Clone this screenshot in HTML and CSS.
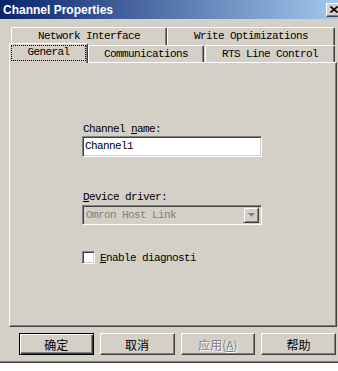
FILE: index.html
```html
<!DOCTYPE html>
<html lang="en">
<head>
  <meta charset="UTF-8">
  <title>Channel Properties</title>
  <link rel="stylesheet" href="styles.css">
</head>
<body>

  <div class="dialog">
    <!-- title bar -->
    <div class="titlebar">
      <span class="title">Channel Properties</span>
      <span class="close">
        <svg width="8" height="7" viewBox="0 0 8 7"><path d="M0.5 0.5 L7.5 6.5 M7.5 0.5 L0.5 6.5" stroke="#000" stroke-width="1.6" fill="none"/></svg>
      </span>
    </div>

    <div class="dialog-body">
      <!-- tabs -->
      <div class="tabs">
        <div class="tab-row tab-row-back">
          <div class="tab tab-net">Network Interface</div>
          <div class="tab tab-write">Write Optimizations</div>
        </div>
        <div class="tab-row tab-row-front">
          <div class="tab tab-general tab-active"><span class="focus">General</span></div>
          <div class="tab tab-comm">Communications</div>
          <div class="tab tab-rts">RTS Line Control</div>
        </div>
      </div>

      <!-- General page -->
      <div class="panel">
        <label class="field-label">Channel <u>n</u>ame:</label>
        <div class="textbox">Channel1</div>

        <label class="field-label field-label-gap"><u>D</u>evice driver:</label>
        <div class="combo">
          <span class="combo-text">Omron Host Link</span>
          <span class="combo-btn">
            <svg width="7" height="4" viewBox="0 0 7 4"><path d="M0 0 H7 L3.5 4 Z" fill="#808080"/></svg>
          </span>
        </div>

        <div class="check-row">
          <span class="checkbox"></span>
          <span class="check-label"><u>E</u>nable diagnosti</span>
        </div>
      </div>

      <!-- buttons -->
      <div class="buttons">
        <div class="btn btn-default">确定</div>
        <div class="btn">取消</div>
        <div class="btn btn-disabled">应用(<u>A</u>)</div>
        <div class="btn">帮助</div>
      </div>
    </div>
  </div>

</body>
</html>
```

FILE: styles.css
```css
* {
  box-sizing: border-box;
}

body {
  margin: 0;
  width: 338px;
  height: 371px;
  overflow: hidden;
  background: #fff;
  font-family: "Liberation Mono", monospace;
  font-size: 11px;
  color: #000;
}

.dialog {
  width: 345px;
  height: 363px;
  background: #d4d0c8;
  border-bottom: 1px solid #404040;
  box-shadow: inset 0 -1px #808080;
}

/* title bar */
.titlebar {
  height: 19px;
  display: flex;
  align-items: center;
  padding: 0 3px;
  background: linear-gradient(to right, #0a246a, #a6caf0);
}

.title {
  color: #fff;
  font-family: "Liberation Sans", sans-serif;
  font-weight: bold;
  font-size: 12px;
}

.close {
  margin-left: auto;
  width: 16px;
  height: 14px;
  display: flex;
  align-items: center;
  justify-content: center;
  background: #d4d0c8;
  border: 1px solid;
  border-color: #fff #404040 #404040 #fff;
  box-shadow: inset -1px -1px #808080;
}

.dialog-body {
  padding: 0 9px;
}

/* tabs */
.tabs {
  margin-top: 8px;
  width: 328px;
}

.tab-row {
  display: flex;
}

.tab-row-back {
  padding-left: 2px;
  height: 18px;
}

.tab-row-front {
  height: 17px;
  align-items: flex-end;
}

.tab {
  height: 18px;
  background: #d4d0c8;
  border-top: 1px solid #fff;
  border-left: 1px solid #fff;
  border-right: 1px solid #404040;
  box-shadow: inset -1px 0 #808080;
  border-top-left-radius: 2px;
  border-top-right-radius: 2px;
  text-align: center;
  line-height: 17px;
  letter-spacing: -0.6px;
  white-space: nowrap;
}

.tab-net { width: 156px; }
.tab-write { width: 168px; }
.tab-general { width: 79px; }
.tab-comm { width: 116px; height: 17px; line-height: 17px; }
.tab-rts { width: 130px; height: 17px; line-height: 17px; margin-left: 1px; }

.tab-active {
  height: 20px;
  margin-bottom: -1px;
  position: relative;
  z-index: 1;
  padding: 1px 1px 2px 1px;
}

.focus {
  display: block;
  height: 16px;
  line-height: 14px;
  outline: 1px dotted #000;
  outline-offset: -1px;
}

/* page */
.panel {
  width: 328px;
  height: 265px;
  border-top: 1px solid #fff;
  border-left: 1px solid #fff;
  border-right: 1px solid #404040;
  border-bottom: 1px solid #404040;
  box-shadow: inset -1px -1px #808080;
  padding: 60px 0 0 72px;
}

.field-label {
  display: block;
  height: 12px;
  line-height: 12px;
  padding-left: 1px;
  letter-spacing: -0.6px;
}

.field-label-gap {
  margin-top: 34px;
}

.textbox {
  width: 180px;
  height: 21px;
  margin-top: 1px;
  padding-left: 2px;
  background: #fff;
  border: 1px solid;
  border-color: #808080 #fff #fff #808080;
  box-shadow: inset 1px 1px #404040, inset -1px -1px #d4d0c8;
  line-height: 19px;
  letter-spacing: -0.6px;
}

.combo {
  width: 180px;
  height: 20px;
  margin-top: 2px;
  display: flex;
  align-items: center;
  padding: 0 2px 0 2px;
  background: #d4d0c8;
  border: 1px solid;
  border-color: #808080 #fff #fff #808080;
  box-shadow: inset 1px 1px #404040, inset -1px -1px #d4d0c8;
  letter-spacing: -0.6px;
}

.combo-text {
  color: #808080;
  padding-left: 1px;
}

.combo-btn {
  margin-left: auto;
  width: 16px;
  height: 16px;
  display: flex;
  align-items: center;
  justify-content: center;
  border: 1px solid;
  border-color: #d4d0c8 #404040 #404040 #d4d0c8;
  box-shadow: inset 1px 1px #fff, inset -1px -1px #808080;
}

.check-row {
  margin-top: 26px;
  display: flex;
  align-items: center;
  height: 13px;
}

.checkbox {
  width: 13px;
  height: 13px;
  background: #fff;
  border: 1px solid;
  border-color: #808080 #fff #fff #808080;
  box-shadow: inset 1px 1px #404040, inset -1px -1px #d4d0c8;
}

.check-label {
  margin-left: 5px;
  letter-spacing: -0.6px;
}

/* dialog buttons */
.buttons {
  display: flex;
  gap: 6px;
  margin-top: 6px;
  padding-left: 10px;
}

.btn {
  width: 75px;
  height: 22px;
  display: flex;
  align-items: center;
  justify-content: center;
  font-family: "Noto Sans CJK SC", sans-serif;
  font-size: 12px;
  border: 1px solid;
  border-color: #fff #404040 #404040 #fff;
  box-shadow: inset -1px -1px #808080;
}

.btn-default {
  border-color: #000;
  box-shadow: inset 1px 1px #fff, inset -1px -1px #404040, inset -2px -2px #808080;
}

.btn-disabled {
  color: #808080;
  text-shadow: 1px 1px #fff;
}
```
